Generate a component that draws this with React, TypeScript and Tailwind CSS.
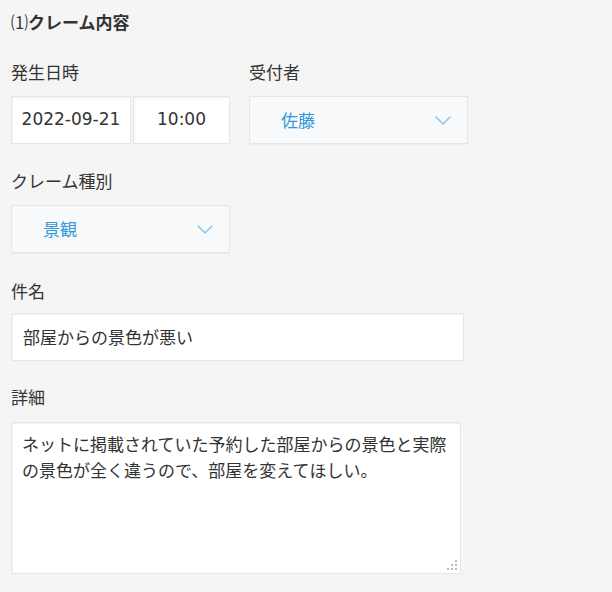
const font = { fontFamily: '"Noto Sans CJK JP", "Noto Sans", sans-serif' };

function Chevron() {
  return (
    <svg width="16" height="9" viewBox="0 0 16 9" fill="none" className="flex-shrink-0">
      <path d="M1 1l7 7 7-7" stroke="#8fc3ea" strokeWidth="1.5" strokeLinecap="round" strokeLinejoin="round" />
    </svg>
  );
}

function Select({ value, width }: { value: string; width: string }) {
  return (
    <div
      className={`${width} h-[48px] flex items-center justify-between pl-[31px] pr-[16px] bg-[#f7f9fa] border border-[#e3e7e8] shadow-[0_1px_1px_rgba(0,0,0,0.03)]`}
    >
      <span className="text-[17px] text-[#3498db]">{value}</span>
      <Chevron />
    </div>
  );
}

function Label({ children }: { children: React.ReactNode }) {
  return <p className="h-6 leading-6 text-[17px] text-[#333]">{children}</p>;
}

const inputBox =
  'bg-white border border-[#e3e7e8] shadow-[inset_1px_1px_2px_rgba(0,0,0,0.06)] text-[17px] text-[#333]';

export default function App() {
  return (
    <div className="w-[612px] h-[592px] bg-[#f5f5f5] pl-[11px] pt-[10px]" style={font}>
      <h2 className="h-6 leading-6 text-[17px] font-bold text-[#333]">
        <span className="font-normal">⑴</span>クレーム内容
      </h2>

      <div className="flex gap-[19px] mt-[26px]">
        <div>
          <Label>発生日時</Label>
          <div className="flex gap-[2px] mt-3 font-['DejaVu_Sans',sans-serif] text-[#444]">
            <div className={`${inputBox} w-[120px] h-[48px] flex items-center justify-center`}>2022-09-21</div>
            <div className={`${inputBox} w-[97px] h-[48px] flex items-center justify-center`}>10:00</div>
          </div>
        </div>
        <div>
          <Label>受付者</Label>
          <div className="mt-3">
            <Select value="佐藤" width="w-[219px]" />
          </div>
        </div>
      </div>

      <div className="mt-[25px]">
        <Label>クレーム種別</Label>
        <div className="mt-[12px]">
          <Select value="景観" width="w-[219px]" />
        </div>
      </div>

      <div className="mt-[26px]">
        <Label>件名</Label>
        <div className={`${inputBox} mt-[10px] w-[453px] h-[48px] flex items-center px-[11px]`}>部屋からの景色が悪い</div>
      </div>

      <div className="mt-[24px]">
        <Label>詳細</Label>
        <div className={`${inputBox} relative mt-[13px] w-[450px] h-[152px] px-[10px] py-[8px] leading-[26px]`}>
          ネットに掲載されていた予約した部屋からの景色と実際の景色が全く違うので、部屋を変えてほしい。
          <svg width="10" height="10" viewBox="0 0 10 10" className="absolute right-[3px] bottom-[3px]">
            <g fill="#b5bcc2">
              <rect x="8" y="0" width="2" height="2" />
              <rect x="4" y="4" width="2" height="2" />
              <rect x="8" y="4" width="2" height="2" />
              <rect x="0" y="8" width="2" height="2" />
              <rect x="4" y="8" width="2" height="2" />
              <rect x="8" y="8" width="2" height="2" />
            </g>
          </svg>
        </div>
      </div>
    </div>
  );
}
